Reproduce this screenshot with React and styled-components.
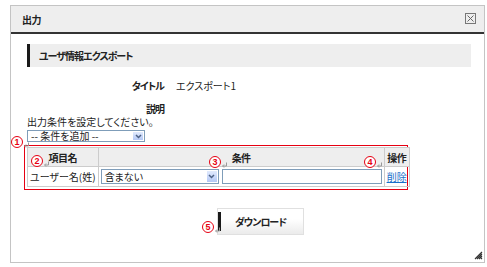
import React from 'react';
import styled, { createGlobalStyle } from 'styled-components';

const GlobalStyle = createGlobalStyle`
  html, body {
    margin: 0;
    padding: 0;
    background: #fff;
  }
  body {
    font-family: "Noto Sans CJK JP", "Liberation Sans", sans-serif;
    font-size: 10px;
    color: #222;
    font-feature-settings: "palt";
  }
`;

const Dialog = styled.div`
  position: relative;
  box-sizing: border-box;
  margin: 5px 0 0 10px;
  width: 475px;
  height: 258px;
  border: 1px solid #c4c4c4;
  background: #fff;
`;

const Header = styled.div`
  display: flex;
  align-items: center;
  justify-content: space-between;
  height: 26px;
  padding: 0 8px 0 11px;
  background: #eeeeee;
  border-bottom: 2px solid #333;
`;

const HeaderTitle = styled.span`
  font-weight: bold;
  letter-spacing: -0.5px;
`;

const CloseBox = styled.span`
  display: flex;
  width: 9px;
  height: 9px;
  border: 1px solid #777;
  align-items: center;
  justify-content: center;
  margin-top: -2px;
`;

const Body = styled.div`
  padding: 10px 13px 0 16px;
`;

const Section = styled.div`
  display: flex;
  align-items: center;
  height: 23px;
  padding-left: 9px;
  background: #eeeeee;
  border-left: 3px solid #1a1a1a;
  font-weight: bold;
  letter-spacing: -1px;
`;

const FormRow = styled.div`
  display: grid;
  grid-template-columns: 137px 1fr;
  column-gap: 12px;
  line-height: 13px;
  margin-top: ${p => p.$top}px;
`;

const Label = styled.span`
  text-align: right;
  font-weight: bold;
  letter-spacing: -1px;
`;

const Note = styled.div`
  line-height: 13px;
`;

const FakeSelect = styled.div`
  box-sizing: border-box;
  display: flex;
  align-items: center;
  width: ${p => p.$w}px;
  height: ${p => p.$h}px;
  border: 1px solid #7f9db9;
  background: #fff;
  margin-top: ${p => p.$top || 0}px;
`;

const SelectText = styled.span`
  flex: 1;
  padding-left: 3px;
  line-height: 1;
  white-space: nowrap;
`;

const SelectArrow = styled.span`
  box-sizing: border-box;
  display: flex;
  align-items: center;
  justify-content: center;
  width: 12px;
  height: 100%;
  background: linear-gradient(#e1eafd, #b4c8f5);
  border: 1px solid #fff;
`;

const Frame = styled.div`
  position: relative;
  box-sizing: border-box;
  width: 384px;
  margin: 3px 0 0 -3px;
  padding: 1px 3px 2px 2px;
  border: 1px solid #e60012;
`;

const Table = styled.table`
  width: 100%;
  border-collapse: collapse;
  td, th {
    border: 1px solid #cccccc;
    padding: 0 2px;
    white-space: nowrap;
  }
  th {
    background: #eeeeee;
    height: 18px;
    font-weight: bold;
    letter-spacing: -0.5px;
  }
  td {
    height: 19px;
  }
`;

const Cond = styled.div`
  display: flex;
  align-items: center;
  gap: 3px;
`;

const TextInput = styled.div`
  box-sizing: border-box;
  width: 160px;
  height: 15px;
  border: 1px solid #7f9db9;
  background: #fff;
`;

const Link = styled.span`
  color: #1a6fc9;
  text-decoration: underline;
`;

const ButtonRow = styled.div`
  display: flex;
  padding-left: 190px;
  margin-top: 18px;
`;

const Button = styled.div`
  position: relative;
  box-sizing: border-box;
  display: flex;
  align-items: center;
  width: 87px;
  height: 27px;
  border: 1px solid #e0e0e0;
  background: linear-gradient(#ffffff, #ffffff 40%, #ebebeb);
  font-weight: bold;
  letter-spacing: -1px;
`;

const ButtonBar = styled.span`
  width: 3px;
  height: 19px;
  background: #1a1a1a;
`;

const ButtonLabel = styled.span`
  flex: 1;
  text-align: center;
  margin-right: 3px;
`;

const Mark = styled.span`
  position: absolute;
  left: ${p => p.$x}px;
  top: ${p => p.$y}px;
  display: flex;
  align-items: flex-end;
  gap: 1px;
  pointer-events: none;
  letter-spacing: 0;
`;

const Circle = styled.span`
  box-sizing: border-box;
  display: flex;
  align-items: center;
  justify-content: center;
  width: 12px;
  height: 12px;
  border: 1px solid #e60012;
  border-radius: 50%;
  color: #e60012;
  font-family: "Liberation Sans", sans-serif;
  font-weight: bold;
  font-size: 9px;
  line-height: 1;
  background: #fff;
`;

const Grip = styled.svg`
  position: absolute;
  right: 1px;
  bottom: 2px;
`;

const ReturnArrow = () => (
  <svg width="5" height="6" viewBox="0 0 5 6">
    <path d="M4.5 0.5 V4 H1" stroke="#999" fill="none" strokeWidth="1" />
    <path d="M2 2.5 L0.5 4 L2 5.5" stroke="#999" fill="none" strokeWidth="1" />
  </svg>
);

const Annot = ({ n, x, y }) => (
  <Mark $x={x} $y={y}>
    <Circle>{n}</Circle>
    <ReturnArrow />
  </Mark>
);

const Chevron = () => (
  <svg width="7" height="5" viewBox="0 0 7 5">
    <path d="M1 1 L3.5 3.5 L6 1" stroke="#4d6185" strokeWidth="1.5" fill="none" />
  </svg>
);

const App = () => (
  <>
    <GlobalStyle />
    <Dialog>
      <Header>
        <HeaderTitle>出力</HeaderTitle>
        <CloseBox>
          <svg width="7" height="7" viewBox="0 0 7 7">
            <path d="M0.5 0.5 L6.5 6.5 M6.5 0.5 L0.5 6.5" stroke="#666" strokeWidth="1" />
          </svg>
        </CloseBox>
      </Header>
      <Body>
        <Section>ユーザ情報エクスポート</Section>
        <FormRow $top={12}>
          <Label>タイトル</Label>
          <span>エクスポート1</span>
        </FormRow>
        <FormRow $top={10}>
          <Label>説明</Label>
          <span></span>
        </FormRow>
        <Note>出力条件を設定してください。</Note>
        <FakeSelect $w={118} $h={12} $top={2}>
          <SelectText>-- 条件を追加 --</SelectText>
          <SelectArrow><Chevron /></SelectArrow>
        </FakeSelect>
        <Frame>
          <Annot n="1" x={-14} y={-10} />
          <Annot n="2" x={6} y={9} />
          <Annot n="3" x={184} y={10} />
          <Annot n="4" x={339} y={10} />
          <Table>
            <colgroup>
              <col style={{ width: 66 }} />
              <col />
              <col style={{ width: 24 }} />
            </colgroup>
            <thead>
              <tr>
                <th>項目名</th>
                <th>条件</th>
                <th>操作</th>
              </tr>
            </thead>
            <tbody>
              <tr>
                <td>ユーザー名(姓)</td>
                <td>
                  <Cond>
                    <FakeSelect $w={118} $h={15}>
                      <SelectText>含まない</SelectText>
                      <SelectArrow><Chevron /></SelectArrow>
                    </FakeSelect>
                    <TextInput />
                  </Cond>
                </td>
                <td><Link>削除</Link></td>
              </tr>
            </tbody>
          </Table>
        </Frame>
        <ButtonRow>
          <Button>
            <Annot n="5" x={-16} y={12} />
            <ButtonBar />
            <ButtonLabel>ダウンロード</ButtonLabel>
          </Button>
        </ButtonRow>
      </Body>
      <Grip width="9" height="9" viewBox="0 0 9 9">
        <path d="M8 1 L1 8 M8 3 L3 8 M8 5 L5 8 M8 7 L7 8" stroke="#333" strokeWidth="1.2" />
      </Grip>
    </Dialog>
  </>
);

export default App;
